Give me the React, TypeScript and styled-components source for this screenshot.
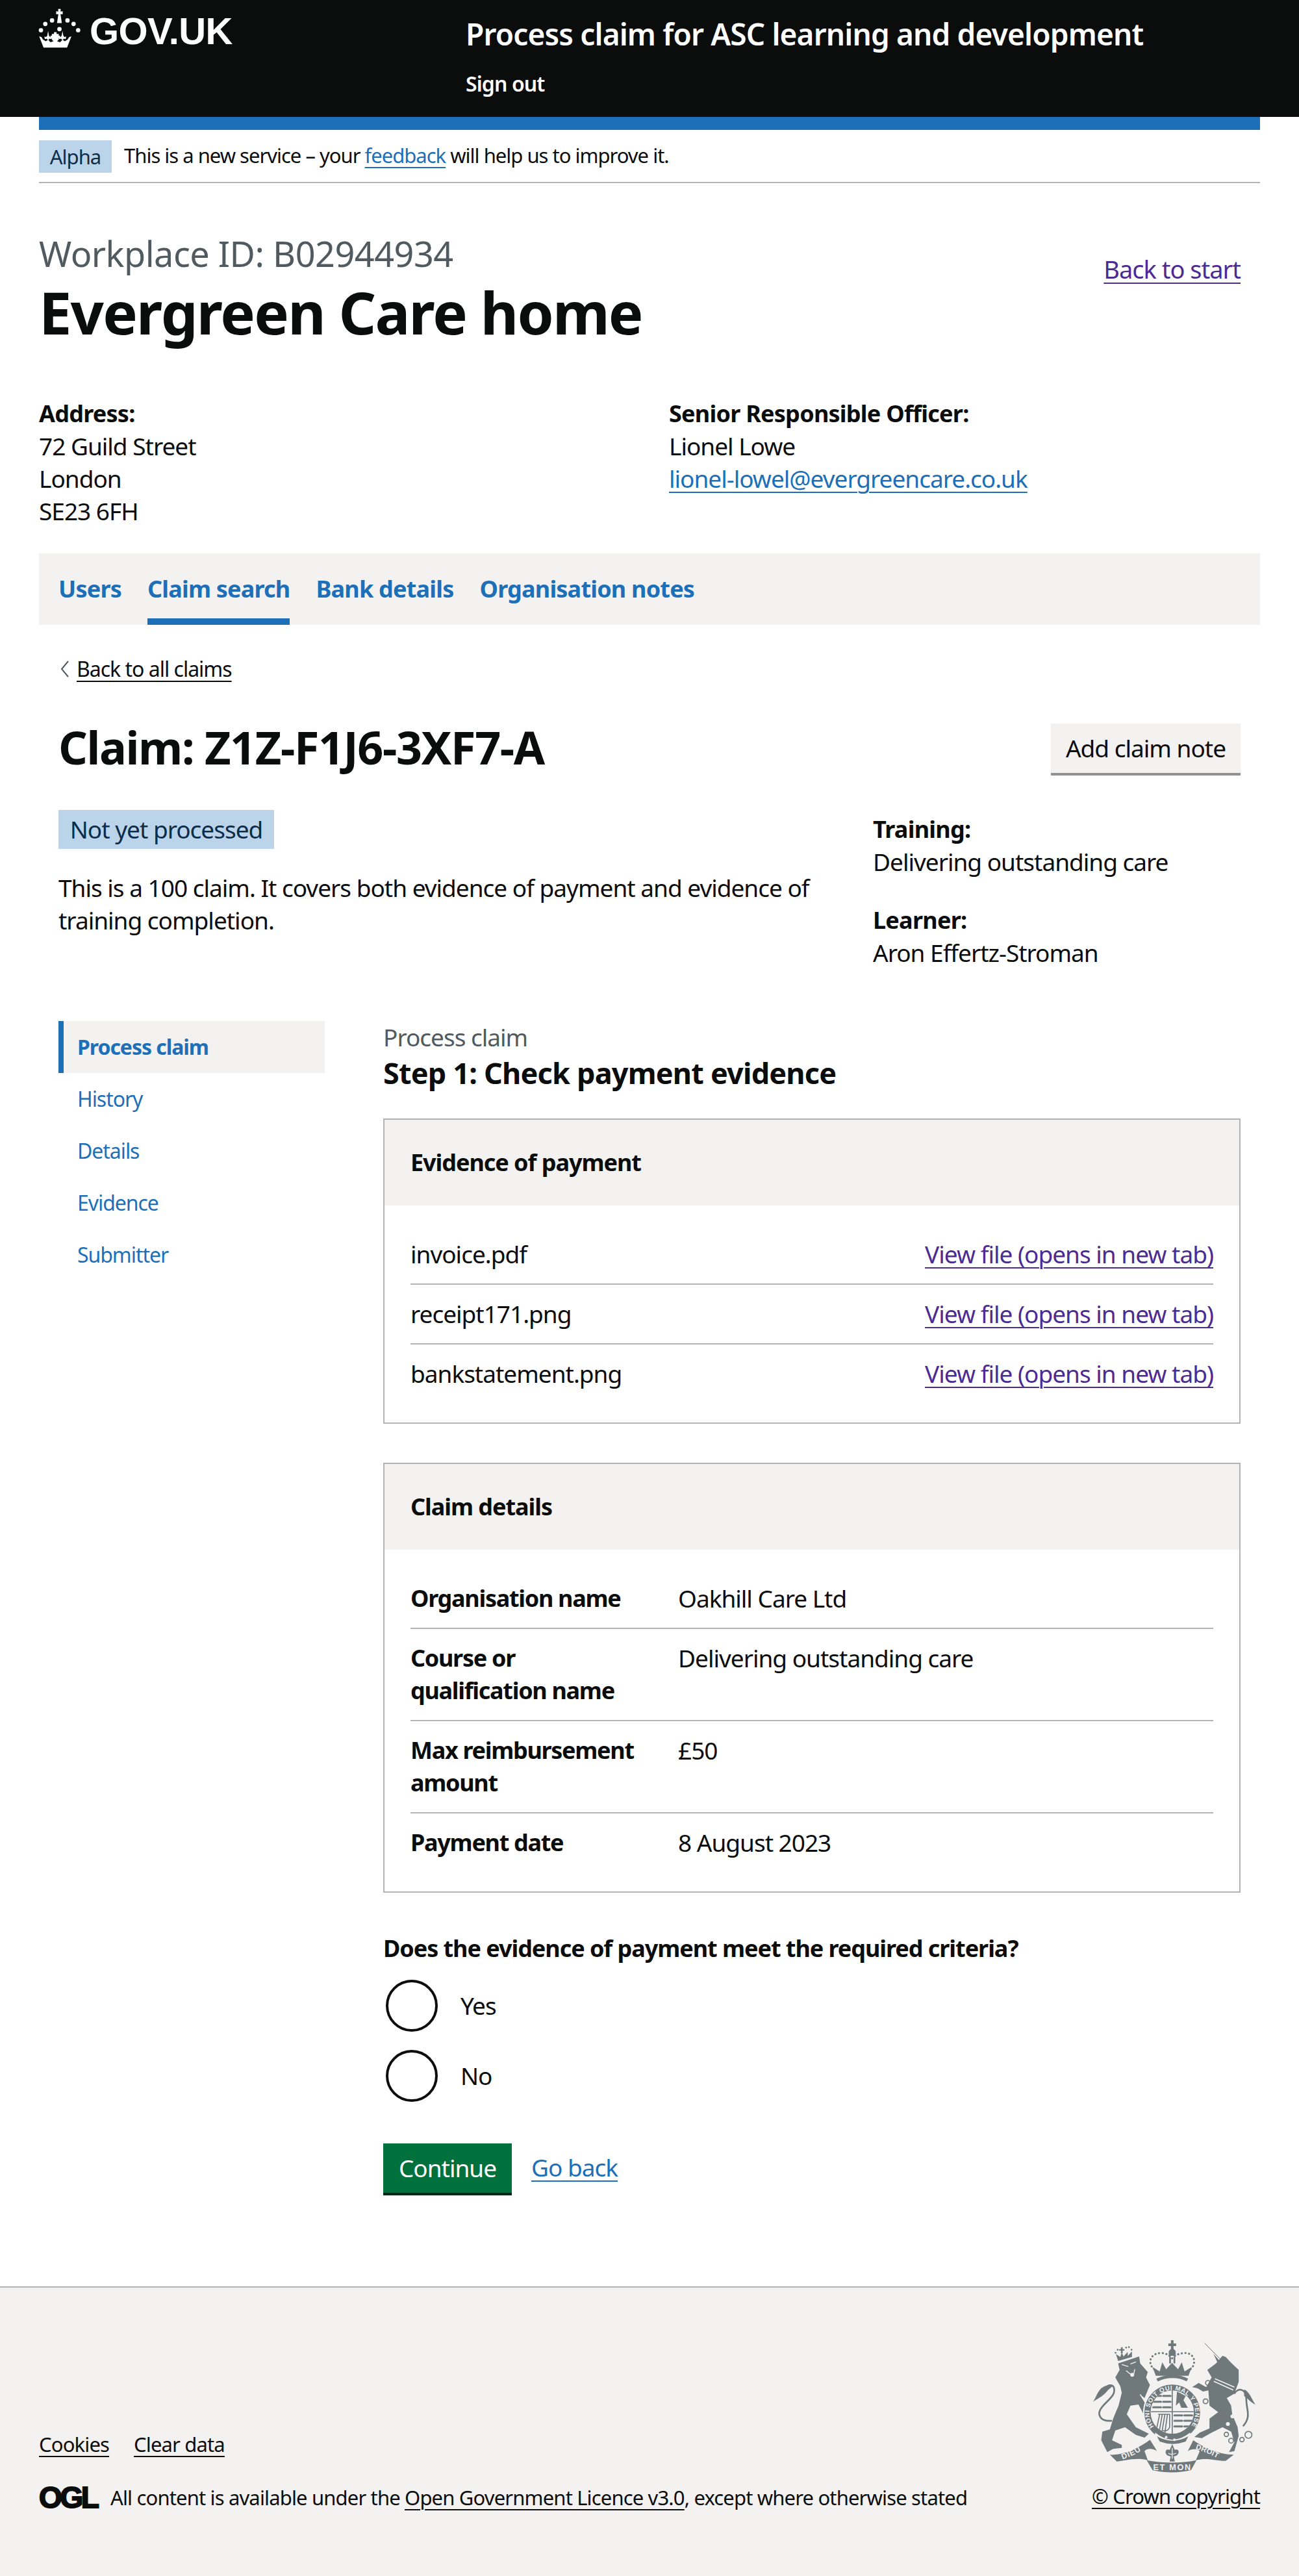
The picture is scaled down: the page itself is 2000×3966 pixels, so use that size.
import React from "react";
import styled, { createGlobalStyle } from "styled-components";

const FONT = `"Noto Sans", "Open Sans", Arial, sans-serif`;
const GlobalStyle = createGlobalStyle`
  html, body { margin: 0; padding: 0; background: #fff; }
  body { font-family: ${FONT}; font-size: 37px; line-height: 50px; color: #0b0c0c; letter-spacing: -1px; }
  * { box-sizing: border-box; }
`;

const Header = styled.header`
  background: #0b0c0c; height: 180px; display: flex; color: #fff; padding-left: 58px;
`;
const LogoLink = styled.a`
  width: 659px; display: flex; align-items: flex-start; gap: 13px; padding-top: 13px; color: #fff; text-decoration: none;
`;
const LogoWord = styled.span`
  font-family: "Liberation Sans", Arial, sans-serif; font-weight: 700; font-size: 58px; line-height: 62px; letter-spacing: -0.6px; margin-top: 4px;
`;
const ServiceCol = styled.div`
  display: flex; flex-direction: column; padding-top: 22px;
`;
const ServiceName = styled.div`
  font-size: 46px; line-height: 60px; font-weight: 600; letter-spacing: -0.85px;
`;
const SignOut = styled.a`
  font-size: 32px; line-height: 40px; font-weight: 600; margin-top: 27px; color: #fff; letter-spacing: -0.9px; text-decoration: none;
`;

const Page = styled.div`padding: 0 60px;`;
const PhaseBar = styled.div`
  border-top: 20px solid #1d70b8; border-bottom: 2px solid #b1b4b6; height: 102px; padding-top: 16px;
  display: flex; align-items: flex-start; gap: 19px; font-size: 31px; line-height: 46px; letter-spacing: -1px;
`;
const PhaseTag = styled.span`
  background: #bbd4ea; color: #0c2d4a; width: 112px; height: 50px; display: flex; align-items: center; justify-content: center;
`;
const Link = styled.a<{ $visited?: boolean; $dark?: boolean }>`
  color: ${(p) => (p.$dark ? "#0b0c0c" : p.$visited ? "#4c2c92" : "#1d70b8")};
  text-decoration: underline; text-decoration-thickness: 2px; text-underline-offset: 6px;
`;

const OrgHead = styled.div`
  margin-top: 78px; display: flex; justify-content: space-between; padding-right: 30px;
`;
const OrgCaption = styled.div`font-size: 54px; line-height: 60px; color: #505a5f; letter-spacing: -0.5px;`;
const OrgTitle = styled.h1`
  margin: 10px 0 0; font-size: 90px; line-height: 100px; font-weight: 700; letter-spacing: -1.8px;
`;
const BackToStart = styled.div`padding-top: 29px; font-size: 38px;`;
const Contact = styled.div`
  margin-top: 82px; display: grid; grid-template-columns: 970px 1fr;
`;
const Strong = styled.strong`display: block; font-weight: 700; font-size: 36px; letter-spacing: -0.75px;`;
const Line = styled.div``;

const Nav = styled.nav`
  margin-top: 40px; height: 110px; background: #f3f2f1; padding: 0 30px; display: flex; gap: 40px;
`;
const NavItem = styled.a<{ $active?: boolean }>`
  height: 110px; padding-top: 30px; font-size: 36px; font-weight: 700; color: #1d70b8; letter-spacing: -0.8px;
  border-bottom: 10px solid ${(p) => (p.$active ? "#1d70b8" : "transparent")};
`;

const Inner = styled.div`padding: 0 30px;`;
const BackLink = styled.div`
  margin-top: 48px; display: flex; align-items: center; gap: 11px; font-size: 32px; line-height: 40px; letter-spacing: -1px;
`;
const ClaimHead = styled.div`
  margin-top: 60px; display: flex; justify-content: space-between; align-items: flex-start;
`;
const ClaimTitle = styled.h2`margin: 0; font-size: 70px; line-height: 80px; font-weight: 700; letter-spacing: -1.4px;`;
const GreyButton = styled.button`
  font: inherit; letter-spacing: inherit; color: #0b0c0c; border: 0; background: #f3f2f1; box-shadow: 0 4px 0 #929191;
  width: 292px; height: 76px; padding: 0; margin-top: 4px;
`;
const Summary = styled.div`
  margin-top: 57px; display: grid; grid-template-columns: 1254px 1fr;
`;
const StatusTag = styled.div`
  background: #bbd4ea; color: #0c2d4a; width: 332px; height: 60px; display: flex; align-items: center; justify-content: center;
`;
const SummaryText = styled.p`margin: 35px 0 0; width: 1180px;`;
const Facts = styled.div`padding-top: 5px; display: flex; flex-direction: column; gap: 40px;`;

const Columns = styled.div`
  margin-top: 80px; display: grid; grid-template-columns: 410px 1fr; column-gap: 90px;
`;
const SideNav = styled.nav`display: flex; flex-direction: column;`;
const SideItem = styled.a<{ $active?: boolean }>`
  height: 80px; display: flex; align-items: center; padding-left: 21px; font-size: 32px; color: #1d70b8; letter-spacing: -1.05px;
  border-left: 8px solid ${(p) => (p.$active ? "#1d70b8" : "transparent")};
  background: ${(p) => (p.$active ? "#f3f2f1" : "transparent")};
  font-weight: ${(p) => (p.$active ? 700 : 400)};
`;
const Caption = styled.div`color: #505a5f; line-height: 50px;`;
const StepTitle = styled.h3`margin: 0; font-size: 45px; line-height: 60px; font-weight: 700; letter-spacing: -0.8px;`;

const Card = styled.section`border: 2px solid #b1b4b6; margin-top: 40px; & + & { margin-top: 60px; }`;
const CardHead = styled.div`
  background: #f3f2f1; height: 132px; display: flex; align-items: center; padding-left: 40px; font-weight: 700; font-size: 36px; letter-spacing: -1.05px;
`;
const CardBody = styled.div`padding: 30px 40px;`;
const FileRow = styled.div`
  display: flex; justify-content: space-between; padding: 20px 0; border-bottom: 2px solid #b1b4b6;
  &:last-child { border-bottom: 0; }
`;
const DetailRow = styled.div`
  display: grid; grid-template-columns: 412px 1fr; padding: 20px 0; border-bottom: 2px solid #b1b4b6;
  &:last-child { border-bottom: 0; }
`;
const DetailKey = styled.div`font-weight: 700; font-size: 36px; letter-spacing: -1.3px; width: 370px;`;

const Legend = styled.div`margin-top: 61px; font-weight: 700; font-size: 36px; letter-spacing: -1.05px; height: 50px;`;
const Radios = styled.div`margin-top: 23px; display: flex; flex-direction: column; gap: 28px;`;
const RadioRow = styled.label`display: flex; align-items: center; gap: 35px; padding-left: 4px;`;
const RadioCircle = styled.span`
  width: 80px; height: 80px; border: 4px solid #0b0c0c; border-radius: 50%; background: #fff;
`;
const Actions = styled.div`margin-top: 64px; display: flex; gap: 30px; align-items: flex-start; padding-bottom: 144px;`;
const GreenButton = styled.button`
  font: inherit; letter-spacing: inherit; color: #fff; background: #00703c; border: 0; box-shadow: 0 4px 0 #002d18;
  width: 198px; height: 76px; padding: 0;
`;
const GoBack = styled.div`padding-top: 12px;`;

const Footer = styled.footer`
  background: #f3f2f1; border-top: 2px solid #b1b4b6; height: 446px; padding: 80px 60px 0; display: flex;
  justify-content: space-between; font-size: 31px; line-height: 40px; letter-spacing: -0.85px;
`;
const FooterLeft = styled.div`padding-top: 141px;`;
const FooterLinks = styled.div`display: flex; gap: 38px;`;
const Licence = styled.div`margin-top: 42px; display: flex; align-items: center; gap: 28px;`;
const Ogl = styled.span`
  font-family: "Liberation Sans", Arial, sans-serif; font-weight: 700; font-size: 46px; line-height: 34px; width: 82px;
  letter-spacing: -3.4px; -webkit-text-stroke: 2px #0b0c0c; color: #0b0c0c;
`;
const FooterRight = styled.div`display: flex; flex-direction: column; align-items: flex-end;`;
const CrestWrap = styled.div`margin-right: 6px; line-height: 0; margin-bottom: 16px;`;

const Crown = () => (
  <svg width="67" height="62" viewBox="25 25 200 185" fill="#fff" aria-hidden="true">
    <path d="M119 27h12l-1 12 10-1v14l-10-1 6 41h-22l6-41-10 1V38l10 1z" />
    <circle cx="40" cy="125" r="10" /><circle cx="60" cy="96" r="10" /><circle cx="91" cy="80" r="10" />
    <circle cx="162" cy="80" r="10" /><circle cx="190" cy="96" r="10" /><circle cx="211" cy="125" r="10" /><circle cx="125" cy="120" r="10" />
    <path d="M32 153l10 3 8 12 12 8 10-6-6-6-8 2-2-12 8 2 5-6 4-22 4 22 5 6 8-2-2 12-8-2-6 6 10 10 14-4-8-8v-6h-6v-12h6v-8l10 0 0-8h12l0 8 10 0v8h6v12h-6v6l-8 8 14 4 10-10-6-6-8 2-2-12 8 2 5-6 4-22 4 22 5 6 8-2-2 12-8-2-6 6 10 6 12-8 8-12 10-3-20 52H52z" />
  </svg>
);

const C = "#6f787b";
const BG = "#f3f2f1";
const F = "Liberation Sans, Arial, sans-serif";
const Crest = () => (
  <svg width="252" height="205" viewBox="250 125 755 615" aria-hidden="true">
    <defs>
      <path id="garter" d="M533 527A106 106 0 1 1 703 527" />
      <path id="ribLeft" d="M388 678Q445 660 492 625" />
      <path id="ribRight" d="M725 630Q790 650 860 690" />
      <clipPath id="disc"><circle cx="618" cy="460" r="100" /></clipPath>
    </defs>
    <path fill={C} d="M368 235L465 203L470 235L505 275L497 300L515 335L490 395L468 378L500 430L495 450L525 470L520 485L490 480L478 455L462 425L425 430L408 470L450 530L510 560L490 578L450 565L400 530L355 545L340 590L385 612L385 625L345 630L318 645L290 590L295 550L330 540L345 490L370 430L385 370L378 340L355 300L375 265Z" />
    <path fill="none" stroke={C} strokeWidth="8" d="M340 500C285 505 265 470 295 435C325 400 360 380 348 345C340 330 320 335 310 350" />
    <path fill={C} d="M252 412C265 395 270 370 290 350C310 335 330 332 345 338L320 360C300 385 280 395 252 412Z" />
    <path fill="none" stroke={BG} strokeWidth="4" d="M385 240L415 250M425 238L450 228M405 268L425 285M445 262L440 285" />
    <circle cx="433" cy="288" r="9" fill={BG} />
    <path fill="none" stroke={BG} strokeWidth="4" d="M470 378L515 450" />
    <path fill={C} d="M368 224L358 192L378 205L385 185L393 203L412 182L413 200L432 180L432 205Z" />
    <path fill={C} d="M381 160h8v9h8v7h-8v12h-8v-12h-8v-7h8z" />
    <g fill={C}><circle cx="356" cy="186" r="4" /><circle cx="366" cy="172" r="4" /><circle cx="405" cy="162" r="4" /><circle cx="418" cy="160" r="4" /><circle cx="430" cy="172" r="4" /></g>
    <path fill="none" stroke={C} strokeWidth="3" d="M768 142L845 220" />
    <path fill={C} d="M808 190L850 238L832 242Z" />
    <path fill={C} d="M850 200L865 205L890 232L925 265L925 320L905 375L870 395L890 430L895 470L920 530L925 570L905 640L880 645L905 600L890 550L850 530L800 555L755 580L720 575L745 555L790 535L790 490L830 460L790 430L785 360L760 365L735 350L710 345L740 325L775 345L800 300L780 265L820 235Z" />
    <path fill="none" stroke={BG} strokeWidth="5" d="M810 318L900 358M815 306L905 345" />
    <path fill="none" stroke={C} strokeWidth="8" d="M905 375C920 345 960 350 960 400C960 450 985 480 945 525" />
    <path fill={C} d="M950 355C975 365 985 400 1002 425C980 415 965 395 950 385Z" />
    <g fill="none" stroke={C} strokeWidth="5"><circle cx="783" cy="325" r="11" /><circle cx="772" cy="410" r="11" /><circle cx="868" cy="563" r="10" /><circle cx="890" cy="592" r="11" /><circle cx="940" cy="587" r="10" /><circle cx="970" cy="565" r="16" /></g>
    <g fill={BG}><circle cx="905" cy="433" r="9" /><circle cx="896" cy="480" r="9" /><circle cx="875" cy="515" r="9" /></g>
    <path fill="none" stroke={C} strokeWidth="9" strokeDasharray="1 16" strokeLinecap="round" d="M535 262C505 240 510 190 565 187C590 187 605 198 617 212C630 198 650 187 680 187C725 190 730 240 702 262" />
    <path fill={C} d="M612 128H624V143H636V155H624V168L634 178V200H602V178L612 168V155H600V143H612Z" />
    <path fill={C} d="M527 252L560 272L572 230L590 262L617 232L645 262L662 230L675 272L708 252L693 292H542Z" />
    <path fill={C} d="M604 204H612V235H604ZM624 204H632V235H624Z" />
    <path fill="none" stroke={C} strokeWidth="14" d="M548 312C590 290 650 290 688 312" />
    <circle cx="618" cy="462" r="135" fill={BG} />
    <circle cx="618" cy="462" r="129" fill={C} />
    <circle cx="618" cy="460" r="100" fill={BG} />
    <g clipPath="url(#disc)" fill={C}>
      <g stroke={C} strokeWidth="9" strokeLinecap="round" strokeDasharray="36 10">
        <path d="M530 385H610M530 412H610M530 438H610" />
        <path d="M628 475H710M628 500H710M628 526H710" />
      </g>
      <path d="M640 365L680 385L670 405L690 440H660L650 415L635 430Z" />
      <g stroke={C} strokeWidth="5" fill="none">
        <path d="M560 470L545 540M572 470L558 550M584 470L570 555M596 470L584 555" />
        <path d="M553 470H606V530C600 545 585 550 575 545" />
      </g>
    </g>
    <path stroke={C} strokeWidth="5" d="M618 360V565M520 458H718" />
    <text fontFamily={F} fontWeight="700" fontSize="29" fill={BG}>
      <textPath href="#garter" textLength="462" lengthAdjust="spacing">HONI SOIT QUI MAL Y PENSE</textPath>
    </text>
    <path fill={BG} d="M540 555Q618 620 700 555L705 575Q618 625 535 575Z" />
    <path fill={C} d="M548 572Q620 612 692 572L680 596Q620 618 560 596Z" />
    <circle cx="590" cy="576" r="6" fill={BG} /><circle cx="628" cy="588" r="6" fill={BG} />
    <path fill={C} d="M330 657C400 660 465 625 515 588L548 640C530 628 505 625 490 640L505 682C450 668 400 685 362 688Z" />
    <path fill={C} d="M902 657C830 655 765 625 715 590L690 640C705 628 735 628 745 640L727 682C785 668 830 688 865 685Z" />
    <path fill={C} d="M500 682C570 697 660 697 730 682L705 728C650 742 580 742 527 728Z" />
    <text fontFamily={F} fontWeight="700" fontSize="36" fill={BG} letterSpacing="3"><textPath href="#ribLeft">DIEU</textPath></text>
    <text fontFamily={F} fontWeight="700" fontSize="34" fill={BG} letterSpacing="1"><textPath href="#ribRight">DROIT</textPath></text>
    <text fontFamily={F} fontWeight="700" fontSize="38" fill={BG} x="530" y="727" textLength="172">ET MON</text>
    <path fill={C} d="M618 608L630 635C650 625 655 655 635 662L625 665L630 688H606L611 665L600 662C580 655 585 625 606 635Z" />
    <path stroke={BG} strokeWidth="4" fill="none" d="M618 625V675M600 650Q612 660 636 650" />
  </svg>
);

const ChevronSvg = styled.svg`margin-left: 3px;`;
const Chevron = () => (
  <ChevronSvg width="14" height="26" viewBox="0 0 14 26" fill="none" stroke="#505a5f" strokeWidth="2" aria-hidden="true">
    <path d="M12 1L2 13l10 12" />
  </ChevronSvg>
);

const files = ["invoice.pdf", "receipt171.png", "bankstatement.png"];
const details: [string, string][] = [
  ["Organisation name", "Oakhill Care Ltd"],
  ["Course or qualification name", "Delivering outstanding care"],
  ["Max reimbursement amount", "£50"],
  ["Payment date", "8 August 2023"],
];

export default function App() {
  return (
    <>
      <GlobalStyle />
      <Header>
        <LogoLink href="#"><Crown /><LogoWord>GOV.UK</LogoWord></LogoLink>
        <ServiceCol>
          <ServiceName>Process claim for ASC learning and development</ServiceName>
          <SignOut href="#">Sign out</SignOut>
        </ServiceCol>
      </Header>
      <Page>
        <PhaseBar>
          <PhaseTag>Alpha</PhaseTag>
          <span>This is a new service – your <Link href="#">feedback</Link> will help us to improve it.</span>
        </PhaseBar>
        <OrgHead>
          <div>
            <OrgCaption>Workplace ID: B02944934</OrgCaption>
            <OrgTitle>Evergreen Care home</OrgTitle>
          </div>
          <BackToStart><Link href="#" $visited>Back to start</Link></BackToStart>
        </OrgHead>
        <Contact>
          <div>
            <Strong>Address:</Strong>
            <Line>72 Guild Street</Line>
            <Line>London</Line>
            <Line>SE23 6FH</Line>
          </div>
          <div>
            <Strong>Senior Responsible Officer:</Strong>
            <Line>Lionel Lowe</Line>
            <Line><Link href="#">lionel-lowel@evergreencare.co.uk</Link></Line>
          </div>
        </Contact>
        <Nav>
          <NavItem>Users</NavItem>
          <NavItem $active>Claim search</NavItem>
          <NavItem>Bank details</NavItem>
          <NavItem>Organisation notes</NavItem>
        </Nav>
        <Inner>
          <BackLink><Chevron /><Link href="#" $dark>Back to all claims</Link></BackLink>
          <ClaimHead>
            <ClaimTitle>Claim: Z1Z-F1J6-3XF7-A</ClaimTitle>
            <GreyButton>Add claim note</GreyButton>
          </ClaimHead>
          <Summary>
            <div>
              <StatusTag>Not yet processed</StatusTag>
              <SummaryText>This is a 100 claim. It covers both evidence of payment and evidence of training completion.</SummaryText>
            </div>
            <Facts>
              <div><Strong>Training:</Strong><Line>Delivering outstanding care</Line></div>
              <div><Strong>Learner:</Strong><Line>Aron Effertz-Stroman</Line></div>
            </Facts>
          </Summary>
          <Columns>
            <SideNav>
              <SideItem $active>Process claim</SideItem>
              <SideItem>History</SideItem>
              <SideItem>Details</SideItem>
              <SideItem>Evidence</SideItem>
              <SideItem>Submitter</SideItem>
            </SideNav>
            <div>
              <Caption>Process claim</Caption>
              <StepTitle>Step 1: Check payment evidence</StepTitle>
              <Card>
                <CardHead>Evidence of payment</CardHead>
                <CardBody>
                  {files.map((f) => (
                    <FileRow key={f}>
                      <span>{f}</span>
                      <Link href="#" $visited>View file (opens in new tab)</Link>
                    </FileRow>
                  ))}
                </CardBody>
              </Card>
              <Card>
                <CardHead>Claim details</CardHead>
                <CardBody>
                  {details.map(([k, v]) => (
                    <DetailRow key={k}><DetailKey>{k}</DetailKey><div>{v}</div></DetailRow>
                  ))}
                </CardBody>
              </Card>
              <Legend>Does the evidence of payment meet the required criteria?</Legend>
              <Radios>
                <RadioRow><RadioCircle />Yes</RadioRow>
                <RadioRow><RadioCircle />No</RadioRow>
              </Radios>
              <Actions>
                <GreenButton>Continue</GreenButton>
                <GoBack><Link href="#">Go back</Link></GoBack>
              </Actions>
            </div>
          </Columns>
        </Inner>
      </Page>
      <Footer>
        <FooterLeft>
          <FooterLinks>
            <Link href="#" $dark>Cookies</Link>
            <Link href="#" $dark>Clear data</Link>
          </FooterLinks>
          <Licence>
            <Ogl>OGL</Ogl>
            <span>All content is available under the <Link href="#" $dark>Open Government Licence v3.0</Link>, except where otherwise stated</span>
          </Licence>
        </FooterLeft>
        <FooterRight>
          <CrestWrap><Crest /></CrestWrap>
          <Link href="#" $dark>© Crown copyright</Link>
        </FooterRight>
      </Footer>
    </>
  );
}
